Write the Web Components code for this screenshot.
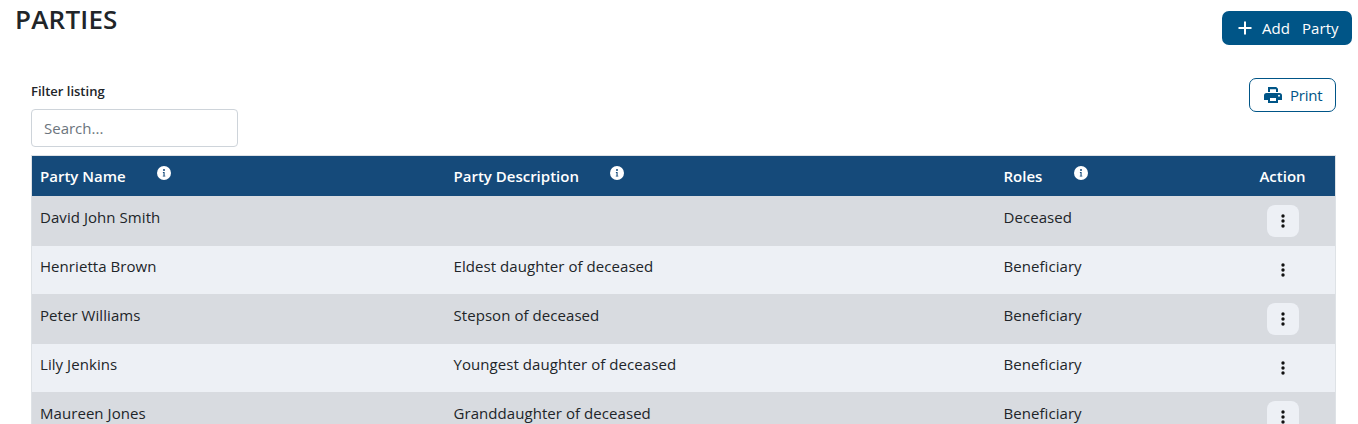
<!DOCTYPE html>
<html><head><meta charset="utf-8"><style>
html,body{margin:0;padding:0;background:#fff;height:424px;overflow:hidden}
body{font-family:"Open Sans","Noto Sans",sans-serif;color:#212529}
</style></head><body>
<parties-page></parties-page>
<script>
const ICON_INFO=`<svg width="14" height="14" viewBox="0 0 14 14"><circle cx="7" cy="7" r="7" fill="#fff"/><circle cx="7" cy="4" r="1" fill="#154a7a"/><path d="M5.9 6h1.7v3.7h.7v.9H5.8v-.9h.7V6.9h-.6z" fill="#154a7a"/></svg>`;
const ICON_DOTS=`<svg width="4" height="14" viewBox="0 0 4 14"><circle cx="2" cy="2" r="1.7" fill="#111"/><circle cx="2" cy="7" r="1.7" fill="#111"/><circle cx="2" cy="12" r="1.7" fill="#111"/></svg>`;
const ICON_PRINT=`<svg width="18" height="16" viewBox="0 0 18 16"><path fill="#005587" d="M4 0h8.2L14 1.8V5h-2V2.2H6V5H4z"/><path fill="#005587" fill-rule="evenodd" d="M2.5 6h13A2.5 2.5 0 0 1 18 8.5V13h-4v3H4v-3H0V8.5A2.5 2.5 0 0 1 2.5 6zM6 11v3h6v-3zm9-3.2a1 1 0 1 0 0 2 1 1 0 0 0 0-2z"/></svg>`;
class PageHeader extends HTMLElement{constructor(){super();this.attachShadow({mode:'open'}).innerHTML=`<style>
:host{display:flex;justify-content:space-between;align-items:flex-start;height:78px;padding:0 6px 0 15px}
h1{margin:2px 0 0;font:600 26px/34px "Open Sans",sans-serif;letter-spacing:.2px;color:#212529}
button{margin-top:11px;width:130px;height:34px;box-sizing:border-box;border:0;border-radius:7px;background:#005587;color:#fff;font:400 15px/20px "Open Sans",sans-serif;display:flex;align-items:center;padding:0 0 0 16px}
svg{margin-right:10px}span+span{margin-left:12px}span{letter-spacing:.05px}
</style><h1>PARTIES</h1><button><svg width="14" height="14" viewBox="0 0 14 14"><path d="M7 .5v13M.5 7h13" stroke="#fff" stroke-width="2"/></svg><span>Add</span><span>Party</span></button>`}}
class FilterBar extends HTMLElement{constructor(){super();this.attachShadow({mode:'open'}).innerHTML=`<style>
:host{display:flex;justify-content:space-between;align-items:flex-start;height:77px;padding:0 22px 0 31px}
label{display:block;font:600 13px/18px "Open Sans",sans-serif;margin:4px 0 9px;color:#212529}
.s{width:207px;height:38px;box-sizing:border-box;border:1px solid #ced4da;border-radius:4px;padding:0 12px;font:400 15px/36px "Open Sans",sans-serif;color:#6c757d;background:#fff}
input::placeholder{color:#6c757d;opacity:1}
button{width:87px;height:34px;box-sizing:border-box;border:1px solid #005587;border-radius:7px;background:#fff;color:#005587;font:400 15px/20px "Open Sans",sans-serif;display:flex;align-items:center;padding:0 0 0 14px;letter-spacing:-.2px}
svg{margin-right:8px}
</style><div><label>Filter listing</label><input class="s" placeholder="Search..."></div><button>${ICON_PRINT}<span>Print</span></button>`}}
class PartyTable extends HTMLElement{constructor(){super();this.attachShadow({mode:'open'}).innerHTML=`<style>
:host{display:block;margin:0 22px 0 31px;border:solid #dee2e6;border-width:1px 1px 0 1px;box-sizing:border-box}
.h{display:grid;grid-template-columns:413.5px 550px 1fr 105px;height:40px;background:#154a7a;color:#fff;font:600 15px/20px "Open Sans",sans-serif;align-items:center}
.h>div{padding-left:8px;display:flex;align-items:center;box-sizing:border-box}
.h svg{position:relative;top:-3px}
.h .a{padding-left:0;justify-content:center}
.i{margin-left:31.5px;display:flex}
</style><div class="h"><div><span>Party Name</span><span class="i">${ICON_INFO}</span></div><div><span>Party Description</span><span class="i">${ICON_INFO}</span></div><div><span>Roles</span><span class="i" style="margin-left:32px">${ICON_INFO}</span></div><div class="a">Action</div></div><slot></slot>`}}
class PartyRow extends HTMLElement{constructor(){super();const dark=this.hasAttribute('dark');this.attachShadow({mode:'open'}).innerHTML=`<style>
:host{display:grid;grid-template-columns:413.5px 550px 1fr 105px;height:${dark?50:48}px;background:${dark?'#d8dbe0':'#edf0f5'};font:400 15px/20px "Open Sans",sans-serif;color:#212529;letter-spacing:.06px}
.c{padding:${dark?11:10}px 0 0 8px;box-sizing:border-box}
.a{display:flex;justify-content:center;padding-top:${dark?9:8}px}
.b{width:32px;height:32px;border-radius:8px;background:${dark?'#edf0f5':'transparent'};display:flex;align-items:center;justify-content:center}
</style><div class="c">${this.getAttribute('name')}</div><div class="c">${this.getAttribute('desc')||''}</div><div class="c">${this.getAttribute('role')}</div><div class="a"><div class="b">${ICON_DOTS}</div></div>`}}
class PartiesPage extends HTMLElement{constructor(){super();this.attachShadow({mode:'open'}).innerHTML=`<style>:host{display:block;height:424px;overflow:hidden}</style>
<page-header></page-header><filter-bar></filter-bar><party-table>
<party-row dark name="David John Smith" role="Deceased"></party-row>
<party-row name="Henrietta Brown" desc="Eldest daughter of deceased" role="Beneficiary"></party-row>
<party-row dark name="Peter Williams" desc="Stepson of deceased" role="Beneficiary"></party-row>
<party-row name="Lily Jenkins" desc="Youngest daughter of deceased" role="Beneficiary"></party-row>
<party-row dark name="Maureen Jones" desc="Granddaughter of deceased" role="Beneficiary"></party-row>
</party-table>`}}
customElements.define('page-header',PageHeader);customElements.define('filter-bar',FilterBar);customElements.define('party-table',PartyTable);customElements.define('party-row',PartyRow);customElements.define('parties-page',PartiesPage);
</script></body></html>
